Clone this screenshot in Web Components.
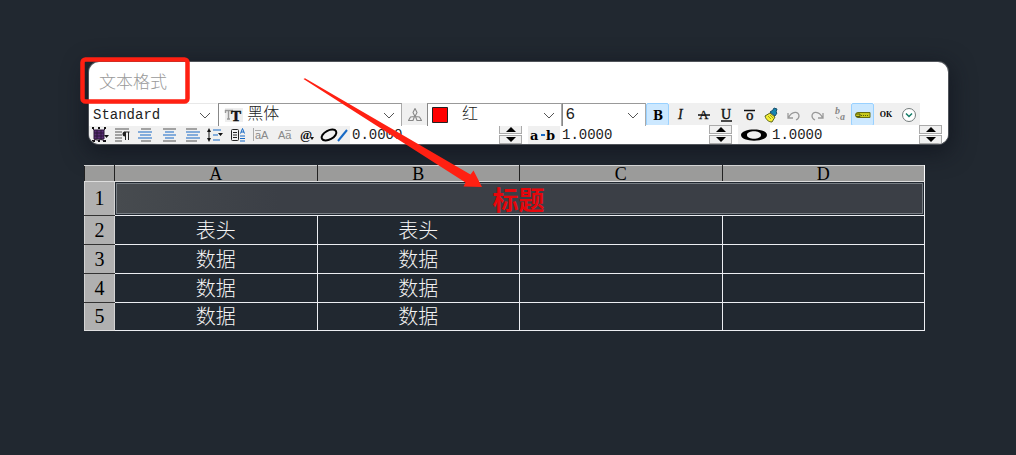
<!DOCTYPE html>
<html lang="zh-CN">
<head>
<meta charset="utf-8">
<title>文本格式</title>
<style>
  body { margin: 0; min-height: 100vh; background: #212830; font-family: "Liberation Mono", "Noto Sans CJK SC", monospace; }
</style>
</head>
<body>
<table-editor></table-editor>
<script>
const svg = (w, h, body) => `<svg width="${w}" height="${h}" viewBox="0 0 ${w} ${h}" fill="none" aria-hidden="true">${body}</svg>`;
const lines = (rows) => rows.map(([x, y, w, c]) => `<path d="M${x} ${y}h${w}" stroke="${c}" stroke-width="1.2"/>`).join('');
const K = '#555', B = '#1769c5';
const serif = 'font-family="Liberation Serif, serif"';
const ICONS = {
  italic: svg(20, 18, `<text x="8" y="13" ${serif} font-style="italic" font-size="14" fill="#111" stroke="#111" stroke-width=".3">I</text>`),
  bold: svg(20, 18, `<text x="11" y="14" text-anchor="middle" font-family="DejaVu Serif, serif" font-weight="bold" font-size="12" fill="#000">B</text>`),
  strike: svg(20, 18, `<text x="6" y="13" ${serif} font-size="13" fill="#111" stroke="#111" stroke-width=".3">A</text><path d="M5 9h12" stroke="#111" stroke-width="1.3"/>`),
  underline: svg(20, 18, `<text x="5" y="13" ${serif} font-size="14" fill="#111" stroke="#111" stroke-width=".4">U</text><path d="M5 15h11" stroke="#111" stroke-width="1.3"/>`),
  overline: svg(20, 18, `<text x="7" y="14" ${serif} font-size="15" fill="#111" stroke="#111" stroke-width=".4">o</text><path d="M5 4.500h11" stroke="#111" stroke-width="1.5"/>`),
  brush: svg(20, 18, `<path d="M4 10l5-3 5 4-3 5c-3 0-6-2-7-6z" fill="#f4ef35" stroke="#5b651c"/><path d="M9 6l3-2 1-2 3 1-1 3 1 1-2 3z" fill="#1686b1" stroke="#17506d"/><path d="M7 10l3 3M9 9l3 3" stroke="#a0a21d"/>`),
  undo: svg(20, 18, `<path d="M4 7v5h5M4.500 11.500C8 5 15 5 15 10c0 2-1 3-3 4" stroke="#999" stroke-width="1.3"/>`),
  redo: svg(20, 18, `<path d="M16 7v5h-5M15.500 11.500C12 5 5 5 5 10c0 2 1 3 3 4" stroke="#999" stroke-width="1.3"/>`),
  stack: svg(20, 18, `<text x="5" y="8" ${serif} font-style="italic" font-weight="bold" font-size="10" fill="#888">b</text><text x="10" y="14" ${serif} font-style="italic" font-weight="bold" font-size="10" fill="#888">a</text><path d="M6 11l3 2" stroke="#aaa"/>`),
  ruler: svg(20, 18, `<path d="M5 6.500h12v5H5a2.500 2.500 0 0 1 0-5z" fill="#c8c91a" stroke="#686c13"/><path d="M8 9.500h8" stroke="#555b10" stroke-dasharray="1 1"/><path d="M3 8h4v2.500H3" stroke="#555b10"/>`),
  ok: svg(20, 18, `<text x="10" y="11" text-anchor="middle" ${serif} font-weight="bold" font-size="8" fill="#000">OK</text>`),
  more: svg(20, 18, `<circle cx="10" cy="9" r="6.500" fill="#fff" stroke="#747c7c"/><path d="M7 7.500l3 3 3-3" stroke="#127c67" stroke-width="1.5"/>`),
  annotate: svg(20, 18, `<path d="M10 2.500l2 4-2 4-2-4zM9.500 10.500l-1.500 4H3.500l2-3.500zM10.500 10.500l1.500 4h4.500l-2-3.500z" stroke="#888" stroke-width="1.1" stroke-linejoin="round"/>`),
  truetype: svg(20, 18, `<path d="M1 2h18v14H1z" fill="#eee"/><path d="M1.500 7V4.500H9M4.500 5v8M3 13h3" stroke="#999" stroke-width="1.400"/><text x="7" y="15" ${serif} font-weight="bold" font-size="15" fill="#111" stroke="#111" stroke-width=".5">T</text>`),
  swatch: svg(18, 18, `<path d="M1.500 1.500h15v15h-15z" fill="#f00" stroke="#222"/>`),
  columns: svg(20, 18, `<path d="M4 4h10v9H4z" fill="#5a2c78" stroke="#2b1638"/><path d="M2 2l2 2m10 0l2-2M4 7h10M4 10h10M7 4v9m4-9v9" stroke="#2b1638"/><path d="M2 1h2v2H2zM8 1h2v2H8zM14 1h2v2h-2zM2 14h3v2H2zM8 14h2v2H8zM13 14h3v2h-3z" fill="#111"/><path d="M3 15c2-3 4 0 6-1s4 0 6 1" stroke="#221329"/><path d="M14 9h5l-2.500 3z" fill="#111"/>`),
  mtext: svg(20, 18, lines([[2,3,14,K],[2,6,7,K],[2,9,7,K],[2,12,7,K],[2,15,7,K]]) + `<path d="M12.500 14V6m3 8V6m1 0h-5" stroke="#222"/><path d="M12 5.500a2 2 0 0 0 0 5z" fill="#222"/>`),
  left: svg(20, 18, lines([[5,3,10,K],[2,6,14,B],[4,9,11,B],[2,12,14,B],[5,15,10,K]])),
  center: svg(20, 18, lines([[4,3,13,K],[6,6,9,B],[4,9,13,B],[6,12,9,B],[4,15,13,K]])),
  right: svg(20, 18, lines([[4,3,11,K],[4,6,14,B],[5,9,11,B],[4,12,14,B],[4,15,11,K]])),
  spacing: svg(20, 18, lines([[8,4,8,B],[8,9,5,B],[8,14,7,B]]) + `<path d="M4 4v10" stroke="#111"/><path d="M2 6l2-4 2 4zM2 12l2 4 2-4zM13 7h5l-2.500 3z" fill="#111"/>`),
  field: svg(20, 18, `<rect x="3.500" y="3.500" width="7" height="11" rx="1" stroke="#222"/><path d="M5 6.500h4M5 9h4M5 11.500h4" stroke="#222"/><path d="M12.500 7.500l2-5 2 5M13 6h3M12 10h5M12 12.500h5M12 15h5" stroke="${B}"/>`),
  upper: svg(20, 18, `<path d="M2.500 2v13M4 4.500h6" stroke="#aaa"/><text x="4" y="13" font-family="Liberation Sans, sans-serif" font-size="11" fill="#888">aA</text>`),
  lower: svg(20, 18, `<path d="M11 4.500h6" stroke="#aaa"/><text x="4" y="13" font-family="Liberation Sans, sans-serif" font-size="11" fill="#888">Aa</text>`),
  symbol: svg(20, 18, `<text x="3" y="13" ${serif} font-weight="bold" font-size="13" fill="#111">@</text><path d="M13 11h4l-2 3z" fill="#111"/>`),
  oblique: svg(32, 18, `<ellipse cx="11" cy="9" rx="8" ry="4.500" transform="rotate(-28 11 9)" stroke="#000" stroke-width="2"/><path d="M20 15l9-11" stroke="#1769c5" stroke-width="2"/>`),
  tracking: svg(32, 18, `<text x="2" y="14" font-family="DejaVu Serif, serif" font-weight="bold" font-size="13" fill="#000">a</text><path d="M13 9h4" stroke="#1769c5" stroke-width="1.800"/><text x="18" y="14" font-family="DejaVu Serif, serif" font-weight="bold" font-size="13" fill="#000">b</text>`),
  width: svg(32, 18, `<path fill-rule="evenodd" d="M3 9C3 1.500 29 1.500 29 9S3 16.500 3 9zm6 0c0 5 14 5 14 0s-14-5-14 0z" fill="#000"/>`)
};

class Base extends HTMLElement {
  connectedCallback() {
    if (!this.shadowRoot) this.attachShadow({ mode: 'open' }).innerHTML = this.render();
  }
}

customElements.define('tool-button', class extends Base {
  render() {
    return `<style>
      :host { display: flex; min-width: 0; }
      button { flex: 1; min-width: 0; display: flex; align-items: center; justify-content: center; margin: 0; padding: 0; border: 1px solid transparent; border-width: 0 1px; background: #f0f0f0; }
      :host([active]) button { background: #cce8ff; border: 1px solid #99d1ff; border-radius: 2px; }
      svg { flex: none; }
    </style><button type="button" aria-label="${this.getAttribute('label')}">${ICONS[this.getAttribute('icon')]}</button>`;
  }
});

customElements.define('tool-combo', class extends Base {
  render() {
    const icon = this.getAttribute('icon');
    return `<style>
      :host { display: flex; align-items: center; position: relative; gap: 3px; padding-left: 3px; background: #fff; border-top: 1px solid #999; border-left: 1px solid #888; border-right: 1px solid #aaa; box-sizing: border-box; min-width: 0; }
      :host([plain]) { border-color: #e8e8e8 transparent transparent; }
      :host([wide]) { padding-left: 5px; }
      select { flex: 1; min-width: 0; height: 22px; padding: 0; border: 0; background: none; appearance: none; color: #222; font: 300 14px/22px "Liberation Mono", "Noto Sans CJK SC", monospace; }
      :host([large]) select { font-size: 16px; }
      svg { flex: none; }
      .chevron { position: absolute; right: 6px; top: 8px; pointer-events: none; }
    </style>${icon ? ICONS[icon] : ''}<select aria-label="${this.getAttribute('label')}"><option>${this.getAttribute('value')}</option></select>
    <svg class="chevron" width="12" height="8" viewBox="0 0 12 8" fill="none"><path d="M1 1l5 5 5-5" stroke="#555"/></svg>`;
  }
});

customElements.define('value-stepper', class extends Base {
  render() {
    const label = this.getAttribute('label');
    return `<style>
      :host { display: flex; min-width: 0; padding-right: 6px; background: #fff; }
      label { flex: none; width: 32px; display: flex; align-items: center; justify-content: center; background: #f0f0f0; }
      input { flex: 1; min-width: 0; box-sizing: border-box; padding: 0 2px; border: 0; background: #fff; color: #222; font: 14px/18px "Liberation Mono", monospace; }
      .steps { flex: none; width: 23px; display: grid; grid-template-rows: 1fr 1fr; gap: 1px; }
      button { display: flex; align-items: center; justify-content: center; padding: 0; border: 1px solid #aaa; background: #f0f0f0; min-height: 0; overflow: hidden; }
    </style><label for="v">${ICONS[this.getAttribute('icon')]}</label><input id="v" aria-label="${label}" value="${this.getAttribute('value')}">
    <div class="steps"><button type="button" aria-label="${label} +"><svg width="10" height="5"><path d="M0 5l5-5 5 5z"/></svg></button><button type="button" aria-label="${label} -"><svg width="10" height="5"><path d="M0 0l5 5 5-5z"/></svg></button></div>`;
  }
});

const button = ([icon, label, active]) => `<tool-button icon="${icon}" label="${label}" ${active ? 'active' : ''}></tool-button>`;

customElements.define('format-panel', class extends Base {
  render() {
    return `<style>
      :host { display: block; overflow: hidden; background: #fff; border-radius: 10px; box-shadow: 0 0 0 1px #50545a, 0 6px 22px 4px rgba(14, 16, 26, .6); }
      header { padding: 0 10px; height: 41px; color: #999; font: 300 17px/38px "Noto Sans CJK SC", sans-serif; }
      .fonts { display: grid; grid-template-columns: 129fr 184fr 25fr 134fr 84fr 274fr 28fr; height: 22px; background: #fff; }
      .styles { display: grid; grid-template-columns: repeat(12, 1fr); }
      .para { display: grid; grid-template-columns: 229fr 210fr 210fr 210fr; height: 19px; }
      .buttons { display: grid; grid-template-columns: repeat(10, 1fr); }
    </style>
    <header>文本格式</header>
    <div class="fonts">
      <tool-combo plain label="文字样式" value="Standard"></tool-combo>
      <tool-combo wide large icon="truetype" label="字体" value="黑体"></tool-combo>
      <tool-button icon="annotate" label="注释性"></tool-button>
      <tool-combo large icon="swatch" label="颜色" value="&nbsp;红"></tool-combo>
      <tool-combo large label="文字高度" value="6"></tool-combo>
      <div class="styles">${[['bold','粗体',1],['italic','斜体'],['strike','删除线'],['underline','下划线'],['overline','上划线'],['brush','匹配格式'],['undo','放弃'],['redo','重做'],['stack','堆叠'],['ruler','标尺',1],['ok','确定'],['more','选项']].map(button).join('')}</div>
    </div>
    <div class="para">
      <div class="buttons">${[['columns','栏'],['mtext','对正'],['left','左对齐'],['center','居中'],['right','右对齐'],['spacing','行距'],['field','字段'],['upper','大写'],['lower','小写'],['symbol','符号']].map(button).join('')}</div>
      <value-stepper icon="oblique" label="倾斜角度" value="0.0000"></value-stepper>
      <value-stepper icon="tracking" label="追踪" value="1.0000"></value-stepper>
      <value-stepper icon="width" label="宽度因子" value="1.0000"></value-stepper>
    </div>`;
  }
});

customElements.define('cad-table', class extends Base {
  render() {
    const row = (n, t) => `<tr><th scope="row">${n}</th><td>${t}</td><td>${t}</td><td></td><td></td></tr>`;
    return `<style>
      :host { display: block; }
      table { width: 100%; table-layout: fixed; border-collapse: collapse; color: #f4f4f4; font: 300 20px/20px "Noto Sans CJK SC", sans-serif; text-align: center; }
      th, td { padding: 0 0 1px; height: 29px; border: 1px solid #eceef2; box-sizing: border-box; }
      th { color: #000; font: 20px/20px "Liberation Serif", serif; background: #b0b0b0; border-color: #d4d4d4 #d4d4d4 #333; }
      tr:last-child th { border-bottom-color: #e0e0e0; }
      tr:last-child > * { height: 28px; }
      thead tr:last-child th { padding: 0; height: 16px; font-size: 18px; line-height: 14px; background: #9b9b9a; border-color: #d4d4d4 #222 #ddd; }
      thead tr th:last-child { border-right-color: #fff; }
      .corner { width: 30px; }
      .title { height: 34px; padding: 1px; }
      input { display: block; width: 100%; height: 31px; box-sizing: border-box; margin: 0; padding: 0 2px 0 0; text-align: center; color: #e6060b; background: linear-gradient(90deg, #474b4f, #3b3f46 20%, #3b3f46); border: 1px solid #777d83; border-radius: 0; font: bold 26px/28px "Noto Sans CJK SC", sans-serif; }
    </style>
    <table>
      <thead><tr><th class="corner"></th><th scope="col">A</th><th scope="col">B</th><th scope="col">C</th><th scope="col">D</th></tr></thead>
      <tbody><tr><th scope="row">1</th><td class="title" colspan="4"><input aria-label="标题" value="标题"></td></tr>
      ${row(2, '表头')}${row(3, '数据')}${row(4, '数据')}${row(5, '数据')}</tbody>
    </table>`;
  }
});

customElements.define('callout-marks', class extends Base {
  render() {
    return `<style>
      :host { position: absolute; left: 80px; top: 56px; pointer-events: none; }
      svg { display: block; }
    </style><svg width="410" height="140" viewBox="80 56 410 140" aria-hidden="true">
      <rect x="82.500" y="59.500" width="105" height="42" rx="3" fill="none" stroke="#ff2012" stroke-width="4.500"/>
      <path d="M303.500 79l1.500-.8L470.500 174.500l3-4L482 187l-18.500-.5 2-4z" fill="#ff2012"/>
    </svg>`;
  }
});

customElements.define('table-editor', class extends Base {
  render() {
    return `<style>
      :host { display: block; position: relative; padding: 62px 0 0; }
      format-panel { margin: 0 68px 0 89px; }
      cad-table { position: relative; margin: 21px 91px 0 84px; }
    </style><format-panel></format-panel><cad-table></cad-table><callout-marks></callout-marks>`;
  }
});
</script>
</body>
</html>
